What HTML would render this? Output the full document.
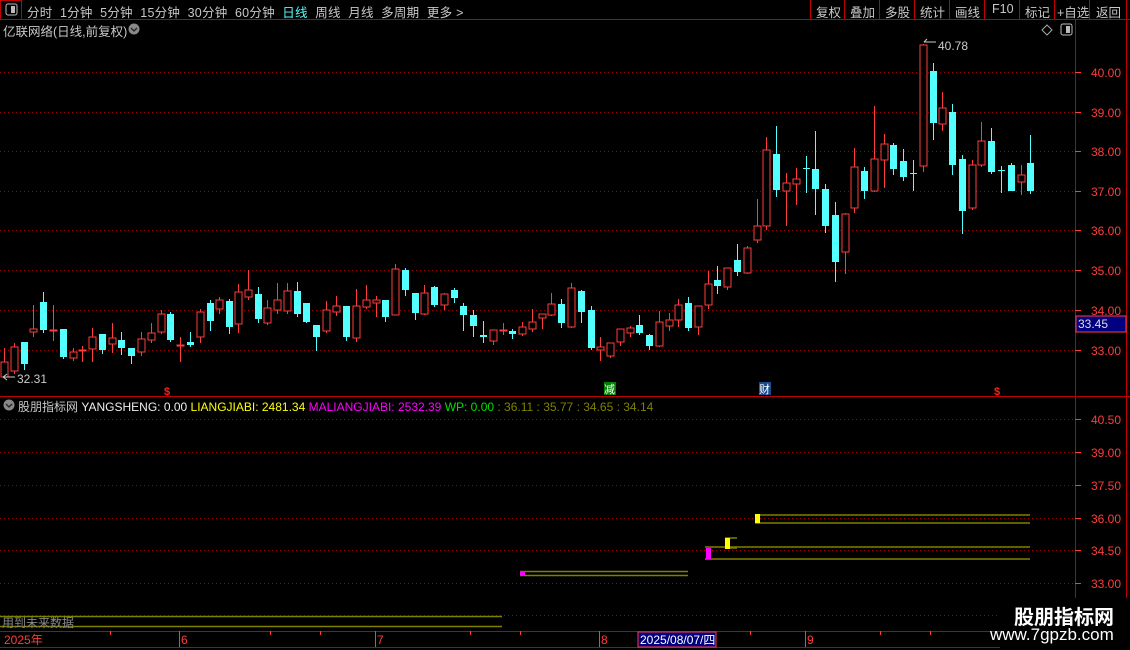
<!DOCTYPE html>
<html><head><meta charset="utf-8"><style>
*{margin:0;padding:0}
body{width:1130px;height:650px;background:#000;overflow:hidden;position:relative;font-family:"Liberation Sans","Noto Sans CJK SC",sans-serif;font-size:12px;color:#c8c8c8}
.a{position:absolute;white-space:nowrap}
svg{position:absolute;left:0;top:0}
.r line,.r path{stroke:#ff3c3c;stroke-width:1}
.r rect{fill:#000;stroke:#ff3c3c;stroke-width:1}
.c line,.c path{stroke:#54ffff;stroke-width:1}
.c rect{fill:#54ffff}
.ax{fill:#ff3c3c;font-size:12px;font-family:"Liberation Sans",sans-serif}
</style></head><body>
<svg width="1130" height="650" xmlns="http://www.w3.org/2000/svg">
<line x1="0" y1="19.5" x2="1130" y2="19.5" stroke="#c00000"/>
<rect x="0.5" y="0.5" width="21" height="19" fill="none" stroke="#c00000"/>
<rect x="6" y="4" width="11" height="11" rx="2" fill="none" stroke="#bbb"/><rect x="11" y="6" width="4" height="7" fill="#bbb"/>
<g stroke="#c00000"><line x1="810.5" y1="0" x2="810.5" y2="19"/><line x1="844.5" y1="0" x2="844.5" y2="19"/><line x1="879.5" y1="0" x2="879.5" y2="19"/><line x1="914.5" y1="0" x2="914.5" y2="19"/><line x1="949.5" y1="0" x2="949.5" y2="19"/><line x1="984.5" y1="0" x2="984.5" y2="19"/><line x1="1019.5" y1="0" x2="1019.5" y2="19"/><line x1="1054.5" y1="0" x2="1054.5" y2="19"/><line x1="1089.5" y1="0" x2="1089.5" y2="19"/><line x1="1126.5" y1="0" x2="1126.5" y2="650"/>
<line x1="1075.5" y1="19" x2="1075.5" y2="650"/>
<line x1="0" y1="396.5" x2="1130" y2="396.5"/>
<line x1="0" y1="631.5" x2="1075" y2="631.5"/>
<line x1="0" y1="647.5" x2="1075" y2="647.5"/>
</g>
<circle cx="134" cy="29" r="5.5" fill="#888"/><path d="M131 28l3 3 3-3" stroke="#222" fill="none" stroke-width="1.3"/>
<path d="M1047 25l5 5-5 5-5-5z" fill="none" stroke="#aaa"/>
<rect x="1061" y="24" width="11" height="11" rx="2" fill="none" stroke="#bbb"/><rect x="1066" y="26" width="4" height="7" fill="#bbb"/>
<circle cx="9" cy="405" r="5.5" fill="#888"/><path d="M6 404l3 3 3-3" stroke="#222" fill="none" stroke-width="1.3"/>
<g stroke="#a00000" stroke-dasharray="1 3">
<line x1="0" y1="72.5" x2="1075" y2="72.5"/><line x1="0" y1="112.5" x2="1075" y2="112.5"/><line x1="0" y1="151.5" x2="1075" y2="151.5"/><line x1="0" y1="191.5" x2="1075" y2="191.5"/><line x1="0" y1="230.5" x2="1075" y2="230.5"/><line x1="0" y1="270.5" x2="1075" y2="270.5"/><line x1="0" y1="310.5" x2="1075" y2="310.5"/><line x1="0" y1="350.5" x2="1075" y2="350.5"/>
<line x1="0" y1="419.5" x2="1075" y2="419.5"/><line x1="0" y1="452.5" x2="1075" y2="452.5"/><line x1="0" y1="485.5" x2="1075" y2="485.5"/><line x1="0" y1="518.5" x2="1075" y2="518.5"/><line x1="0" y1="550.5" x2="1075" y2="550.5"/><line x1="0" y1="583.5" x2="1075" y2="583.5"/><line x1="0" y1="615.5" x2="1075" y2="615.5"/>
</g>
<g stroke="#ff3c3c">
<line x1="1075" y1="72.5" x2="1081" y2="72.5"/><line x1="1075" y1="112.5" x2="1081" y2="112.5"/><line x1="1075" y1="151.5" x2="1081" y2="151.5"/><line x1="1075" y1="191.5" x2="1081" y2="191.5"/><line x1="1075" y1="230.5" x2="1081" y2="230.5"/><line x1="1075" y1="270.5" x2="1081" y2="270.5"/><line x1="1075" y1="310.5" x2="1081" y2="310.5"/><line x1="1075" y1="350.5" x2="1081" y2="350.5"/>
<line x1="1075" y1="419.5" x2="1081" y2="419.5"/><line x1="1075" y1="452.5" x2="1081" y2="452.5"/><line x1="1075" y1="485.5" x2="1081" y2="485.5"/><line x1="1075" y1="518.5" x2="1081" y2="518.5"/><line x1="1075" y1="550.5" x2="1081" y2="550.5"/><line x1="1075" y1="583.5" x2="1081" y2="583.5"/>
</g>
<g class="ax">
<text x="1091" y="77">40.00</text><text x="1091" y="117">39.00</text><text x="1091" y="156">38.00</text><text x="1091" y="196">37.00</text><text x="1091" y="235">36.00</text><text x="1091" y="275">35.00</text><text x="1091" y="315">34.00</text><text x="1091" y="355">33.00</text>
<text x="1091" y="424">40.50</text><text x="1091" y="457">39.00</text><text x="1091" y="490">37.50</text><text x="1091" y="523">36.00</text><text x="1091" y="555">34.50</text><text x="1091" y="588">33.00</text>
</g>
<rect x="1076" y="316" width="50" height="16" fill="#000080" stroke="#ff3c3c"/>
<text x="1078" y="328" fill="#ddd" font-size="12">33.45</text>
<g class="r">
<line x1="4.5" y1="348" x2="4.5" y2="378"/><rect x="1" y="362" width="7" height="15"/>
<line x1="14.5" y1="343" x2="14.5" y2="374"/><rect x="11" y="347" width="7" height="24"/>
<line x1="33.5" y1="305" x2="33.5" y2="337"/><rect x="30" y="329" width="7" height="3"/>
<line x1="53.5" y1="305" x2="53.5" y2="341"/><rect x="50" y="330" width="7" height="1"/>
<line x1="73.5" y1="348" x2="73.5" y2="361"/><rect x="70" y="352" width="7" height="6"/>
<line x1="82.5" y1="346" x2="82.5" y2="362"/><rect x="79" y="350" width="7" height="1"/>
<line x1="92.5" y1="328" x2="92.5" y2="362"/><rect x="89" y="337" width="7" height="12"/>
<line x1="112.5" y1="323" x2="112.5" y2="353"/><rect x="109" y="338" width="7" height="6"/>
<line x1="141.5" y1="332" x2="141.5" y2="356"/><rect x="138" y="339" width="7" height="13"/>
<line x1="151.5" y1="323" x2="151.5" y2="343"/><rect x="148" y="333" width="7" height="7"/>
<line x1="161.5" y1="310" x2="161.5" y2="334"/><rect x="158" y="314" width="7" height="18"/>
<line x1="180.5" y1="337" x2="180.5" y2="362"/><rect x="177" y="345" width="7" height="1"/>
<line x1="200.5" y1="309" x2="200.5" y2="343"/><rect x="197" y="312" width="7" height="25"/>
<line x1="219.5" y1="297" x2="219.5" y2="314"/><rect x="216" y="300" width="7" height="9"/>
<line x1="238.5" y1="284" x2="238.5" y2="333"/><rect x="235" y="292" width="7" height="32"/>
<line x1="248.5" y1="270" x2="248.5" y2="300"/><rect x="245" y="290" width="7" height="7"/>
<line x1="267.5" y1="300" x2="267.5" y2="325"/><rect x="264" y="308" width="7" height="15"/>
<line x1="277.5" y1="283" x2="277.5" y2="314"/><rect x="274" y="300" width="7" height="10"/>
<line x1="287.5" y1="283" x2="287.5" y2="314"/><rect x="284" y="291" width="7" height="20"/>
<line x1="326.5" y1="301" x2="326.5" y2="333"/><rect x="323" y="310" width="7" height="21"/>
<line x1="336.5" y1="296" x2="336.5" y2="316"/><rect x="333" y="306" width="7" height="6"/>
<line x1="356.5" y1="289" x2="356.5" y2="342"/><rect x="353" y="306" width="7" height="32"/>
<line x1="366.5" y1="285" x2="366.5" y2="309"/><rect x="363" y="300" width="7" height="7"/>
<line x1="376.5" y1="296" x2="376.5" y2="317"/><rect x="373" y="300" width="7" height="3"/>
<line x1="395.5" y1="264" x2="395.5" y2="315"/><rect x="392" y="269" width="7" height="46"/>
<line x1="424.5" y1="285" x2="424.5" y2="315"/><rect x="421" y="293" width="7" height="21"/>
<line x1="444.5" y1="293" x2="444.5" y2="310"/><rect x="441" y="294" width="7" height="11"/>
<line x1="493.5" y1="330" x2="493.5" y2="345"/><rect x="490" y="330" width="7" height="11"/>
<line x1="503.5" y1="323" x2="503.5" y2="335"/><rect x="500" y="330" width="7" height="1"/>
<line x1="522.5" y1="322" x2="522.5" y2="336"/><rect x="519" y="327" width="7" height="7"/>
<line x1="532.5" y1="309" x2="532.5" y2="332"/><rect x="529" y="322" width="7" height="7"/>
<line x1="542.5" y1="314" x2="542.5" y2="329"/><rect x="539" y="314" width="7" height="4"/>
<line x1="551.5" y1="293" x2="551.5" y2="316"/><rect x="548" y="304" width="7" height="11"/>
<line x1="571.5" y1="283" x2="571.5" y2="328"/><rect x="568" y="288" width="7" height="39"/>
<line x1="600.5" y1="337" x2="600.5" y2="361"/><rect x="597" y="347" width="7" height="3"/>
<line x1="610.5" y1="343" x2="610.5" y2="358"/><rect x="607" y="343" width="7" height="13"/>
<line x1="620.5" y1="329" x2="620.5" y2="346"/><rect x="617" y="329" width="7" height="13"/>
<line x1="630.5" y1="326" x2="630.5" y2="337"/><rect x="627" y="328" width="7" height="5"/>
<line x1="659.5" y1="311" x2="659.5" y2="347"/><rect x="656" y="322" width="7" height="24"/>
<line x1="669.5" y1="313" x2="669.5" y2="331"/><rect x="666" y="320" width="7" height="6"/>
<line x1="678.5" y1="299" x2="678.5" y2="327"/><rect x="675" y="305" width="7" height="15"/>
<line x1="698.5" y1="306" x2="698.5" y2="335"/><rect x="695" y="306" width="7" height="21"/>
<line x1="708.5" y1="271" x2="708.5" y2="309"/><rect x="705" y="284" width="7" height="21"/>
<line x1="727.5" y1="268" x2="727.5" y2="290"/><rect x="724" y="268" width="7" height="19"/>
<line x1="747.5" y1="246" x2="747.5" y2="274"/><rect x="744" y="248" width="7" height="25"/>
<line x1="757.5" y1="199" x2="757.5" y2="243"/><rect x="754" y="226" width="7" height="14"/>
<line x1="766.5" y1="137" x2="766.5" y2="230"/><rect x="763" y="150" width="7" height="76"/>
<line x1="786.5" y1="173" x2="786.5" y2="226"/><rect x="783" y="183" width="7" height="8"/>
<line x1="796.5" y1="168" x2="796.5" y2="205"/><rect x="793" y="179" width="7" height="5"/>
<line x1="845.5" y1="213" x2="845.5" y2="274"/><rect x="842" y="214" width="7" height="38"/>
<line x1="854.5" y1="148" x2="854.5" y2="213"/><rect x="851" y="167" width="7" height="41"/>
<line x1="874.5" y1="106" x2="874.5" y2="192"/><rect x="871" y="159" width="7" height="32"/>
<line x1="884.5" y1="134" x2="884.5" y2="188"/><rect x="881" y="144" width="7" height="16"/>
<line x1="923.5" y1="44" x2="923.5" y2="172"/><rect x="920" y="45" width="7" height="121"/>
<line x1="942.5" y1="92" x2="942.5" y2="131"/><rect x="939" y="108" width="7" height="16"/>
<line x1="972.5" y1="160" x2="972.5" y2="210"/><rect x="969" y="165" width="7" height="43"/>
<line x1="981.5" y1="122" x2="981.5" y2="167"/><rect x="978" y="141" width="7" height="24"/>
<line x1="1021.5" y1="165" x2="1021.5" y2="195"/><rect x="1018" y="175" width="7" height="7"/>
</g>
<g class="c">
<line x1="24.5" y1="342" x2="24.5" y2="370"/><rect x="21" y="342" width="7" height="22"/>
<line x1="43.5" y1="292" x2="43.5" y2="333"/><rect x="40" y="302" width="7" height="28"/>
<line x1="63.5" y1="329" x2="63.5" y2="359"/><rect x="60" y="329" width="7" height="28"/>
<line x1="102.5" y1="334" x2="102.5" y2="354"/><rect x="99" y="334" width="7" height="16"/>
<line x1="121.5" y1="332" x2="121.5" y2="355"/><rect x="118" y="340" width="7" height="8"/>
<line x1="131.5" y1="348" x2="131.5" y2="364"/><rect x="128" y="348" width="7" height="8"/>
<line x1="170.5" y1="312" x2="170.5" y2="342"/><rect x="167" y="314" width="7" height="26"/>
<line x1="190.5" y1="332" x2="190.5" y2="347"/><rect x="187" y="342" width="7" height="3"/>
<line x1="210.5" y1="300" x2="210.5" y2="331"/><rect x="207" y="303" width="7" height="18"/>
<line x1="229.5" y1="299" x2="229.5" y2="334"/><rect x="226" y="301" width="7" height="26"/>
<line x1="258.5" y1="287" x2="258.5" y2="323"/><rect x="255" y="294" width="7" height="25"/>
<line x1="297.5" y1="282" x2="297.5" y2="317"/><rect x="294" y="291" width="7" height="23"/>
<line x1="306.5" y1="303" x2="306.5" y2="323"/><rect x="303" y="303" width="7" height="19"/>
<line x1="316.5" y1="325" x2="316.5" y2="351"/><rect x="313" y="325" width="7" height="12"/>
<line x1="346.5" y1="306" x2="346.5" y2="341"/><rect x="343" y="306" width="7" height="31"/>
<line x1="385.5" y1="300" x2="385.5" y2="322"/><rect x="382" y="300" width="7" height="17"/>
<line x1="405.5" y1="268" x2="405.5" y2="296"/><rect x="402" y="270" width="7" height="20"/>
<line x1="415.5" y1="293" x2="415.5" y2="320"/><rect x="412" y="293" width="7" height="20"/>
<line x1="434.5" y1="286" x2="434.5" y2="307"/><rect x="431" y="287" width="7" height="18"/>
<line x1="454.5" y1="288" x2="454.5" y2="303"/><rect x="451" y="290" width="7" height="8"/>
<line x1="463.5" y1="303" x2="463.5" y2="331"/><rect x="460" y="306" width="7" height="9"/>
<line x1="473.5" y1="310" x2="473.5" y2="337"/><rect x="470" y="315" width="7" height="11"/>
<line x1="483.5" y1="321" x2="483.5" y2="343"/><rect x="480" y="335" width="7" height="2"/>
<line x1="512.5" y1="329" x2="512.5" y2="339"/><rect x="509" y="331" width="7" height="3"/>
<line x1="561.5" y1="299" x2="561.5" y2="328"/><rect x="558" y="304" width="7" height="19"/>
<line x1="581.5" y1="290" x2="581.5" y2="323"/><rect x="578" y="291" width="7" height="21"/>
<line x1="591.5" y1="306" x2="591.5" y2="350"/><rect x="588" y="310" width="7" height="38"/>
<line x1="639.5" y1="315" x2="639.5" y2="335"/><rect x="636" y="325" width="7" height="8"/>
<line x1="649.5" y1="334" x2="649.5" y2="350"/><rect x="646" y="335" width="7" height="11"/>
<line x1="688.5" y1="297" x2="688.5" y2="331"/><rect x="685" y="303" width="7" height="25"/>
<line x1="717.5" y1="266" x2="717.5" y2="294"/><rect x="714" y="280" width="7" height="6"/>
<line x1="737.5" y1="244" x2="737.5" y2="276"/><rect x="734" y="260" width="7" height="12"/>
<line x1="776.5" y1="126" x2="776.5" y2="197"/><rect x="773" y="154" width="7" height="36"/>
<line x1="806.5" y1="156" x2="806.5" y2="193"/><rect x="803" y="168" width="7" height="1"/>
<line x1="815.5" y1="131" x2="815.5" y2="215"/><rect x="812" y="169" width="7" height="20"/>
<line x1="825.5" y1="184" x2="825.5" y2="233"/><rect x="822" y="189" width="7" height="37"/>
<line x1="835.5" y1="202" x2="835.5" y2="282"/><rect x="832" y="215" width="7" height="47"/>
<line x1="864.5" y1="167" x2="864.5" y2="199"/><rect x="861" y="171" width="7" height="20"/>
<line x1="893.5" y1="143" x2="893.5" y2="175"/><rect x="890" y="145" width="7" height="24"/>
<line x1="903.5" y1="149" x2="903.5" y2="181"/><rect x="900" y="161" width="7" height="16"/>
<line x1="913.5" y1="160" x2="913.5" y2="191"/><rect x="910" y="173" width="7" height="1"/>
<line x1="933.5" y1="63" x2="933.5" y2="140"/><rect x="930" y="71" width="7" height="52"/>
<line x1="952.5" y1="104" x2="952.5" y2="175"/><rect x="949" y="112" width="7" height="53"/>
<line x1="962.5" y1="155" x2="962.5" y2="234"/><rect x="959" y="159" width="7" height="52"/>
<line x1="991.5" y1="128" x2="991.5" y2="174"/><rect x="988" y="141" width="7" height="31"/>
<line x1="1001.5" y1="166" x2="1001.5" y2="193"/><rect x="998" y="170" width="7" height="1"/>
<line x1="1011.5" y1="163" x2="1011.5" y2="191"/><rect x="1008" y="165" width="7" height="26"/>
<line x1="1030.5" y1="135" x2="1030.5" y2="194"/><rect x="1027" y="163" width="7" height="28"/>
</g>
<path d="M3 377h12M3 377l4-3M3 377l4 3" stroke="#ccc" fill="none"/>
<text x="17" y="383" fill="#ccc" font-size="12">32.31</text>
<path d="M924 42h12M924 42l3-3" stroke="#ccc" fill="none"/>
<text x="938" y="50" fill="#ccc" font-size="12">40.78</text>
<text x="164" y="395" fill="#ff2020" font-size="11" font-weight="bold">$</text>
<text x="994" y="395" fill="#ff2020" font-size="11" font-weight="bold">$</text>
<rect x="604" y="382" width="12" height="13" fill="#008000"/>
<text x="604" y="393" fill="#fff" font-size="11">减</text>
<rect x="759" y="382" width="12" height="13" fill="#1a4a8a"/>
<text x="759" y="393" fill="#fff" font-size="11">财</text>
<g stroke="#808000" stroke-width="1.5">
<line x1="755" y1="515" x2="1030" y2="515"/><line x1="755" y1="523" x2="1030" y2="523"/>
<line x1="725" y1="538" x2="737" y2="538"/><line x1="725" y1="548" x2="737" y2="548"/>
<line x1="705" y1="547" x2="1030" y2="547"/><line x1="705" y1="559" x2="1030" y2="559"/>
<line x1="520" y1="571.5" x2="688" y2="571.5"/><line x1="520" y1="575.5" x2="688" y2="575.5"/>
<line x1="0" y1="616.5" x2="502" y2="616.5"/><line x1="0" y1="626.5" x2="502" y2="626.5"/>
</g>
<rect x="755" y="514" width="5" height="9" fill="#ffff00"/>
<rect x="725" y="538" width="5" height="11" fill="#ffff00"/>
<rect x="706" y="548" width="5" height="11" fill="#ff00ff"/>
<rect x="520" y="571" width="5" height="5" fill="#ff00ff"/>
<g stroke="#ff3c3c">
<line x1="179.5" y1="631" x2="179.5" y2="647"/><line x1="375.5" y1="631" x2="375.5" y2="647"/><line x1="599.5" y1="631" x2="599.5" y2="647"/><line x1="805.5" y1="631" x2="805.5" y2="647"/>
<line x1="110.5" y1="631" x2="110.5" y2="635"/><line x1="270.5" y1="631" x2="270.5" y2="635"/><line x1="320.5" y1="631" x2="320.5" y2="635"/><line x1="470.5" y1="631" x2="470.5" y2="635"/><line x1="520.5" y1="631" x2="520.5" y2="635"/><line x1="700.5" y1="631" x2="700.5" y2="635"/><line x1="750.5" y1="631" x2="750.5" y2="635"/><line x1="880.5" y1="631" x2="880.5" y2="635"/><line x1="930.5" y1="631" x2="930.5" y2="635"/>
</g>
<text class="ax" x="4" y="644">2025年</text>
<text class="ax" x="181" y="644">6</text>
<text class="ax" x="377" y="644">7</text>
<text class="ax" x="601" y="644">8</text>
<text class="ax" x="807" y="644">9</text>
<rect x="638" y="632" width="78" height="15" fill="#000080" stroke="#ff3c3c"/>
<text x="640" y="644" fill="#fff" font-size="12">2025/08/07/四</text>
<rect x="1000" y="598" width="130" height="52" fill="#000"/>
</svg>
<div class="a" style="left:27px;top:2px;font-size:12.5px;letter-spacing:0.25px">分时&nbsp;&nbsp;1分钟&nbsp;&nbsp;5分钟&nbsp;&nbsp;15分钟&nbsp;&nbsp;30分钟&nbsp;&nbsp;60分钟&nbsp;&nbsp;<span style="color:#54ffff">日线</span>&nbsp;&nbsp;周线&nbsp;&nbsp;月线&nbsp;&nbsp;多周期&nbsp;&nbsp;更多 &gt;</div>
<div class="a" style="left:816px;top:2px;font-size:12.5px">复权</div>
<div class="a" style="left:850px;top:2px;font-size:12.5px">叠加</div>
<div class="a" style="left:885px;top:2px;font-size:12.5px">多股</div>
<div class="a" style="left:920px;top:2px;font-size:12.5px">统计</div>
<div class="a" style="left:955px;top:2px;font-size:12.5px">画线</div>
<div class="a" style="left:992px;top:2px;font-size:12.5px">F10</div>
<div class="a" style="left:1025px;top:2px;font-size:12.5px">标记</div>
<div class="a" style="left:1057px;top:2px;font-size:12.5px">+自选</div>
<div class="a" style="left:1096px;top:2px;font-size:12.5px">返回</div>
<div class="a" style="left:3px;top:21px;font-size:12.5px">亿联网络(日线,前复权)</div>
<div class="a" style="left:18px;top:398px;font-size:12px"><span style="color:#c8c8c8">股朋指标网</span> <span style="color:#eee">YANGSHENG: 0.00</span> <span style="color:#ffff00">LIANGJIABI: 2481.34</span> <span style="color:#ff00ff">MALIANGJIABI: 2532.39</span> <span style="color:#00e000">WP: 0.00</span> <span style="color:#808000">: 36.11 : 35.77 : 34.65 : 34.14</span></div>
<div class="a" style="left:2px;top:614px;font-size:12px;color:#888">用到未来数据</div>
<div class="a" style="left:1014px;top:601px;font-size:20px;font-weight:bold;color:#fff">股朋指标网</div>
<div class="a" style="left:990px;top:625px;font-size:17px;color:#fff">www.7gpzb.com</div>
</body></html>
